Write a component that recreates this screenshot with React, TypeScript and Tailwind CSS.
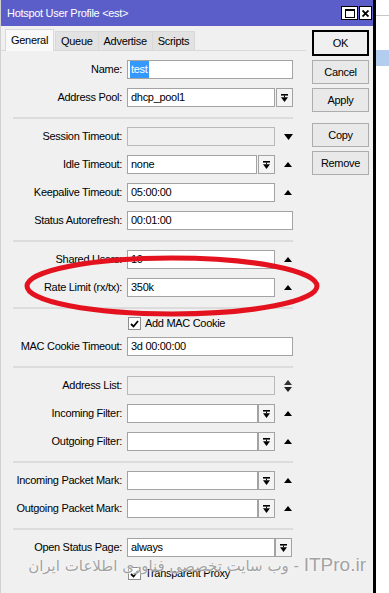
import React from "react";

const Up = () => (
  <svg width="8" height="5" viewBox="0 0 8 5"><polygon points="0,5 8,5 4,0" fill="#000" /></svg>
);
const Down = () => (
  <svg width="9" height="6" viewBox="0 0 9 6"><polygon points="0,0 9,0 4.5,6" fill="#000" /></svg>
);
const UpDown = () => (
  <svg width="8" height="12" viewBox="0 0 8 12">
    <polygon points="0,5 8,5 4,0" fill="#333" />
    <polygon points="0,7 8,7 4,12" fill="#222" />
  </svg>
);
const DropIcon = () => (
  <svg width="7" height="8" viewBox="0 0 7 8">
    <rect x="0" y="0" width="7" height="1.6" fill="#000" />
    <rect x="3" y="1.6" width="1" height="1.6" fill="#000" />
    <polygon points="0,3.2 7,3.2 3.5,8" fill="#000" />
  </svg>
);

function Row({ label, children }: { label: string; children: React.ReactNode }) {
  return (
    <div className="flex items-center h-[19px]">
      <div className="w-[121px] text-right whitespace-nowrap">{label}</div>
      <div className="ml-[5px] flex items-center h-full">{children}</div>
    </div>
  );
}

function Input({ w, value, disabled }: { w: string; value?: React.ReactNode; disabled?: boolean }) {
  return (
    <div
      className={
        "h-[19px] border flex items-center pl-[3px] whitespace-nowrap overflow-hidden " +
        w +
        (disabled ? " bg-[#f0f0f0] border-[#b9b9b9]" : " bg-white border-[#a3a3a3]")
      }
    >
      {value}
    </div>
  );
}

function Drop({ ml }: { ml: string }) {
  return (
    <div className={"w-[17px] h-[19px] border border-[#a3a3a3] bg-[#f4f4f4] flex items-center justify-center " + ml}>
      <DropIcon />
    </div>
  );
}

function Sep() {
  return <div className="ml-[12px] w-[280px] h-[2px] bg-[#dcdcdc] mt-[10px] mb-[8px]" />;
}

function Check({ label, extra }: { label: string; extra?: string }) {
  return (
    <div className={"flex items-center h-[13px] ml-[127px] " + (extra || "")}>
      <div className="w-[13px] h-[13px] border border-[#8e8e8e] bg-white flex items-center justify-center">
        <svg width="9" height="8" viewBox="0 0 9 8">
          <polyline points="1,4 3.5,6.5 8,1" fill="none" stroke="#000" strokeWidth="1.8" />
        </svg>
      </div>
      <span className="ml-[4px] whitespace-nowrap">{label}</span>
    </div>
  );
}

function Btn({ children, cls }: { children: React.ReactNode; cls: string }) {
  return (
    <div className={"h-[24px] border border-[#adadad] bg-[#e9e9e9] flex items-center justify-center " + cls}>
      {children}
    </div>
  );
}

export default function App() {
  return (
    <div className="w-[389px] h-[593px] overflow-hidden relative bg-white flex font-['Liberation_Sans',Arial,sans-serif] text-[11px] tracking-[-0.3px] text-black">
      {/* window */}
      <div className="w-[376px] h-full flex flex-col bg-[#f0f0f0] border-r-[3px] border-black border-l border-l-[#d0d0d0]">
        {/* title bar */}
        <div className="h-[26px] bg-[#5b5ec8] flex items-center justify-between pl-[6px] pr-[1px] shrink-0">
          <span className="text-white text-[11px] pt-[1px]">Hotspot User Profile &lt;est&gt;</span>
          <div className="flex items-center gap-[1px]">
            <div className="w-[17px] h-[14px] bg-white border border-black flex items-center justify-center">
              <div className="w-[10px] h-[9px] border border-black border-t-2" />
            </div>
            <div className="w-[13px] h-[14px] bg-white border border-black flex items-center justify-center">
              <svg width="7" height="7" viewBox="0 0 7 7">
                <path d="M0.5,0.5 L6.5,6.5 M6.5,0.5 L0.5,6.5" stroke="#000" strokeWidth="1.8" />
              </svg>
            </div>
          </div>
        </div>
        {/* body */}
        <div className="flex flex-1">
          {/* left column */}
          <div className="w-[305px] flex flex-col">
            <div className="flex items-end h-[25px] border-b border-[#d9d9d9] pl-[4px]">
              <div className="h-[22px] -mb-px px-[5px] bg-[#f9f9f9] border border-b-0 border-[#d9d9d9] flex items-center">General</div>
              <div className="h-[19px] ml-[1px] px-[5px] bg-[#e2e2e2] border border-b-0 border-[#d9d9d9] flex items-center">Queue</div>
              <div className="h-[19px] px-[5px] bg-[#e2e2e2] border border-b-0 border-l-0 border-[#d9d9d9] flex items-center">Advertise</div>
              <div className="h-[19px] px-[5px] bg-[#e2e2e2] border border-b-0 border-l-0 border-[#d9d9d9] flex items-center">Scripts</div>
            </div>
            <div className="flex flex-col pt-[9px]">
              <div className="flex flex-col gap-[9px]">
                <Row label="Name:">
                  <Input
                    w="w-[166px]"
                    value={<span className="bg-[#3399ff] text-white px-[1px] -ml-[1px]">test</span>}
                  />
                </Row>
                <Row label="Address Pool:">
                  <Input w="w-[148px]" value="dhcp_pool1" />
                  <Drop ml="ml-[1px]" />
                </Row>
              </div>
              <Sep />
              <div className="flex flex-col gap-[9px]">
                <Row label="Session Timeout:">
                  <Input w="w-[148px]" disabled />
                  <div className="ml-[9px]"><Down /></div>
                </Row>
                <Row label="Idle Timeout:">
                  <Input w="w-[130px]" value="none" />
                  <Drop ml="ml-[1px]" />
                  <div className="ml-[9px]"><Up /></div>
                </Row>
                <Row label="Keepalive Timeout:">
                  <Input w="w-[148px]" value="05:00:00" />
                  <div className="ml-[9px]"><Up /></div>
                </Row>
                <Row label="Status Autorefresh:">
                  <Input w="w-[166px]" value="00:01:00" />
                </Row>
              </div>
              <Sep />
              <div className="flex flex-col gap-[9px]">
                <Row label="Shared Users:">
                  <Input w="w-[148px]" value="10" />
                  <div className="ml-[9px]"><Up /></div>
                </Row>
                <Row label="Rate Limit (rx/tx):">
                  <Input w="w-[148px]" value="350k" />
                  <div className="ml-[9px]"><Up /></div>
                </Row>
              </div>
              <Sep />
              <div className="flex flex-col gap-[9px]">
                <Check label="Add MAC Cookie" extra="-mb-[2px]" />
                <Row label="MAC Cookie Timeout:">
                  <Input w="w-[166px]" value="3d 00:00:00" />
                </Row>
              </div>
              <Sep />
              <div className="flex flex-col gap-[9px]">
                <Row label="Address List:">
                  <Input w="w-[148px]" disabled />
                  <div className="ml-[9px] flex items-center"><UpDown /></div>
                </Row>
                <Row label="Incoming Filter:">
                  <Input w="w-[131px]" />
                  <Drop ml="ml-0" />
                  <div className="ml-[9px]"><Up /></div>
                </Row>
                <Row label="Outgoing Filter:">
                  <Input w="w-[131px]" />
                  <Drop ml="ml-0" />
                  <div className="ml-[9px]"><Up /></div>
                </Row>
              </div>
              <Sep />
              <div className="flex flex-col gap-[9px]">
                <Row label="Incoming Packet Mark:">
                  <Input w="w-[131px]" />
                  <Drop ml="ml-0" />
                  <div className="ml-[9px]"><Up /></div>
                </Row>
                <Row label="Outgoing Packet Mark:">
                  <Input w="w-[131px]" />
                  <Drop ml="ml-0" />
                  <div className="ml-[9px]"><Up /></div>
                </Row>
              </div>
              <Sep />
              <div className="flex flex-col gap-[10px]">
                <Row label="Open Status Page:">
                  <Input w="w-[148px]" value="always" />
                  <Drop ml="ml-0" />
                </Row>
                <Check label="Transparent Proxy" />
              </div>
            </div>
          </div>
          {/* right buttons */}
          <div className="flex flex-col pt-[4px] pl-[6px] w-[63px]">
            <div className="h-[26px] border-2 border-black bg-[#f0f0f0] flex items-center justify-center">OK</div>
            <Btn cls="mt-[4px]">Cancel</Btn>
            <Btn cls="mt-[4px]">Apply</Btn>
            <Btn cls="mt-[11px]">Copy</Btn>
            <Btn cls="mt-[4px]">Remove</Btn>
          </div>
        </div>
      </div>
      {/* outside strip */}
      <div className="flex-1 bg-white flex flex-col">
        <div className="h-[15px]" />
        <div className="h-px bg-[#c8c8c8]" />
        <div className="h-[34px]" />
        <div className="h-[16px] bg-[#b3cdef]" />
      </div>

      {/* red ellipse annotation */}
      <svg className="absolute left-0 top-0 pointer-events-none" width="389" height="593" viewBox="0 0 389 593">
        <ellipse cx="172" cy="286" rx="145" ry="28" fill="none" stroke="#e3121e" strokeWidth="5" />
      </svg>

      {/* watermark */}
      <div
        dir="rtl"
        className="absolute right-[23px] top-[554px] whitespace-nowrap flex items-baseline leading-[22px] tracking-normal text-[#a2a2a2] font-['DejaVu_Sans','Liberation_Sans',sans-serif] [text-shadow:0_0_2px_#fff,0_0_1px_#fff]"
      >
        <span className="text-[19px] font-['Liberation_Sans',sans-serif]">ITPro.ir</span>
        <span className="text-[15px]">&nbsp;- وب سایت تخصصی فناوری اطلاعات ایران</span>
      </div>
    </div>
  );
}
